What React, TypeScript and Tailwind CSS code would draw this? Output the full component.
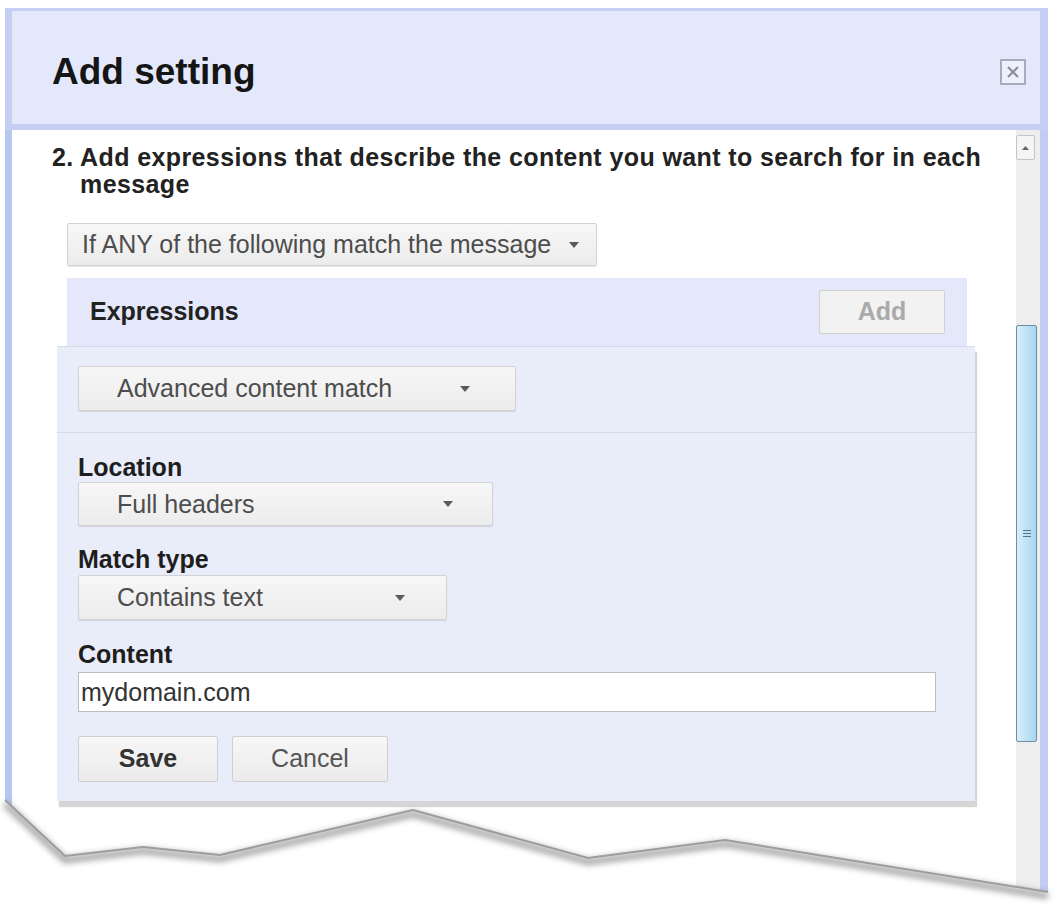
import React from "react";

const Caret = () => (
  <svg width="10" height="6" viewBox="0 0 10 6" className="shrink-0">
    <path d="M0 0h10L5 6z" fill="#5b5b5b" />
  </svg>
);

const Select = ({ label, className }: { label: string; className: string }) => (
  <div
    className={`flex items-center justify-between rounded-[2px] border border-[#d2d2d2] bg-linear-to-b from-[#f7f7f7] to-[#ececec] text-[25px] leading-none text-[#4d4d4d] shadow-[0_1px_1px_rgba(0,0,0,0.1)] ${className}`}
  >
    <span>{label}</span>
    <Caret />
  </div>
);

const Label = ({ children }: { children: React.ReactNode }) => (
  <div className="text-[25px] font-bold leading-[28px] text-[#1e1e1e]">{children}</div>
);

// ragged bottom edge of the dialog, in page coordinates
const tear = "5,800 65,856 143,847 220,855 413,810 588,858 725,840 1048,892";

const App = () => {
  return (
    <div className="relative h-[904px] w-[1062px] overflow-hidden bg-white pl-[5px] pt-[8px] font-['Liberation_Sans',Arial,sans-serif]">
      <div className="flex h-[888px] w-[1043px] flex-col">
        {/* title bar */}
        <div className="flex h-[122px] shrink-0 items-center justify-between border-x-[7px] border-t-[3px] border-b-[6px] border-[#c6cef4] border-r-[8px] bg-[#e4e8fb] pl-[40px] pr-[14px] pt-[8px]">
          <h1 className="text-[37px] font-bold leading-none text-[#151515]">Add setting</h1>
          <button className="flex h-[26px] w-[26px] items-center justify-center border-2 border-[#a7acbb] bg-[#eef0fb]">
            <svg width="14" height="14" viewBox="0 0 14 14">
              <path d="M2 2l10 10M12 2L2 12" stroke="#8a8f9c" strokeWidth="2.2" />
            </svg>
          </button>
        </div>

        {/* body */}
        <div className="flex flex-1 border-l-[7px] border-r-[8px] border-l-[#b7c7ef] border-r-[#c3ccf4] bg-white">
          <div className="flex-1 pl-[40px] pt-[14px]">
            <div className="flex text-[25px] font-bold leading-[27px] tracking-[0.4px] text-[#222]">
              <span className="w-[28px] shrink-0">2.</span>
              <span>Add expressions that describe the content you want to search for in each message</span>
            </div>

            <div className="ml-[15px] mt-[25px]">
              <Select
                label="If ANY of the following match the message"
                className="h-[43px] w-[530px] pl-[14px] pr-[17px]"
              />

              <div className="mt-[12px] flex h-[68px] w-[900px] items-center justify-between bg-[#e4e8fa] pl-[23px] pr-[22px]">
                <span className="text-[25px] font-bold text-[#222]">Expressions</span>
                <button className="h-[44px] w-[126px] rounded-[2px] border border-[#d0d0d0] bg-[#f2f2f2] text-[25px] font-bold text-[#aaaaaa]">
                  Add
                </button>
              </div>

              {/* expression editor */}
              <div className="-ml-[10px] w-[918px] border-t border-[#d6d9e8] bg-[#e9ecf9] shadow-[2px_6px_1px_rgba(0,0,0,0.16)]">
                <div className="border-b border-[#d4d8e8] pb-[21px] pl-[21px] pt-[19px]">
                  <Select label="Advanced content match" className="h-[45px] w-[438px] pl-[38px] pr-[45px]" />
                </div>
                <div className="pb-[19px] pl-[21px] pt-[20px]">
                  <Label>Location</Label>
                  <Select label="Full headers" className="mt-[1px] h-[44px] w-[415px] pl-[38px] pr-[39px]" />
                  <div className="mt-[19px]">
                    <Label>Match type</Label>
                  </div>
                  <Select label="Contains text" className="mt-[2px] h-[45px] w-[369px] pl-[38px] pr-[41px]" />
                  <div className="mt-[20px]">
                    <Label>Content</Label>
                  </div>
                  <input
                    readOnly
                    value="mydomain.com"
                    className="mt-[4px] h-[40px] w-[858px] border border-[#bdbdbd] bg-white pl-[2px] text-[25px] text-[#333] outline-none"
                  />
                  <div className="mt-[24px] flex gap-[14px]">
                    <button className="h-[46px] w-[140px] rounded-[2px] border border-[#cfcfcf] bg-linear-to-b from-[#f7f7f7] to-[#ebebeb] text-[25px] font-bold text-[#333]">
                      Save
                    </button>
                    <button className="h-[46px] w-[156px] rounded-[2px] border border-[#cfcfcf] bg-linear-to-b from-[#f7f7f7] to-[#ebebeb] text-[25px] text-[#555]">
                      Cancel
                    </button>
                  </div>
                </div>
              </div>
            </div>
          </div>

          {/* scrollbar */}
          <div className="flex w-[25px] shrink-0 flex-col border-l border-white bg-[#eeeeee] pt-[5px]">
            <div className="flex h-[25px] w-[19px] items-center justify-center rounded-[2px] border border-[#c4c4c4] bg-[#f5f5f5]">
              <svg width="7" height="4" viewBox="0 0 7 4">
                <path d="M0 4h7L3.5 0z" fill="#666" />
              </svg>
            </div>
            <div className="mt-[165px] flex h-[417px] w-[21px] items-center justify-center rounded-[2px] border border-[#6f8ea3] bg-linear-to-r from-[#d6eefa] to-[#a8d6ef]">
              <div className="flex flex-col gap-[2px]">
                <div className="h-px w-[8px] bg-[#4f7890]" />
                <div className="h-px w-[8px] bg-[#4f7890]" />
                <div className="h-px w-[8px] bg-[#4f7890]" />
              </div>
            </div>
          </div>
        </div>
      </div>

      <svg
        className="absolute left-0 top-[770px]"
        width="1062"
        height="134"
        viewBox="0 770 1062 134"
      >
        <defs>
          <filter id="tearShadow" x="-5%" y="-50%" width="110%" height="200%">
            <feGaussianBlur stdDeviation="3" />
          </filter>
        </defs>
        <polygon points={`0,770 0,800 ${tear} 1062,892 1062,904 0,904`} fill="#ffffff" />
        <polyline
          points={tear}
          transform="translate(0 4)"
          fill="none"
          stroke="#7d7d7d"
          strokeWidth="6"
          opacity="0.75"
          filter="url(#tearShadow)"
        />
        <polyline points={tear} fill="none" stroke="#9d9d9d" strokeWidth="2" />
      </svg>
    </div>
  );
};

export default App;
